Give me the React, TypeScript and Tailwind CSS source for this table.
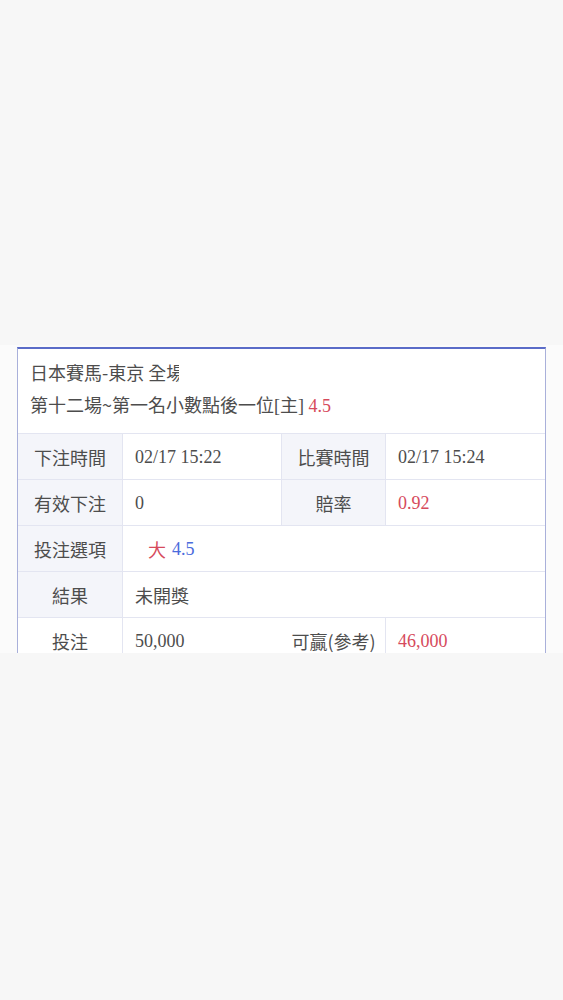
const font = { fontFamily: '"Liberation Serif", "Noto Sans CJK TC", serif' };
const sans = { fontFamily: '"Noto Sans CJK TC", sans-serif' };

function Label({ children, last }: { children: React.ReactNode; last?: boolean }) {
  return (
    <div
      className={`flex items-center justify-center border-r border-b border-[#e3e5f1] text-[18px] leading-none text-[#4d4d4d] ${
        last ? "bg-white" : "bg-[#f4f5fa]"
      }`}
      style={sans}
    >
      {children}
    </div>
  );
}

function Value({ children, className = "" }: { children: React.ReactNode; className?: string }) {
  return (
    <div className={`flex items-center pl-3 border-b border-[#e3e5f1] text-[18px] leading-none text-[#4d4d4d] ${className}`}>
      {children}
    </div>
  );
}

export default function App() {
  return (
    <div className="h-[1000px] bg-[#f7f7f7] flex flex-col" style={font}>
      <div className="h-[345px] shrink-0" />

      <div className="h-[308px] shrink-0 bg-[#fbfbfb] px-[17px] pt-[2px] overflow-hidden">
        <div className="bg-white border-t-2 border-x border-t-[#5b6cc8] border-x-[#a9b0da] h-full">
          {/* header */}
          <div className="pl-3 pt-[7px] pb-[11px] border-b border-[#e3e5f1] text-[18px] text-[#4d4d4d] leading-[32px]">
            <div style={sans}>
              日本賽馬-東京 全<span className="inline-block w-[13px] overflow-hidden align-top whitespace-nowrap">場</span>
            </div>
            <div>
              <span style={sans}>第十二場~第一名小數點後一位</span>
              [主] <span className="text-[#d64a5c]">4.5</span>
            </div>
          </div>

          {/* table */}
          <div className="grid grid-cols-[105px_159px_104px_1fr] auto-rows-[46px]">
            <Label>下注時間</Label>
            <Value className="border-r">02/17 15:22</Value>
            <Label>比賽時間</Label>
            <Value>02/17 15:24</Value>

            <Label>有效下注</Label>
            <Value className="border-r">0</Value>
            <Label>賠率</Label>
            <Value className="text-[#d64a5c]">0.92</Value>

            <Label>投注選項</Label>
            <Value className="col-span-3 pl-[25px]">
              <span className="text-[#d64a5c]" style={sans}>大</span>
              <span className="ml-[6px] text-[#4a6bdc]">4.5</span>
            </Value>

            <Label>結果</Label>
            <Value className="col-span-3">
              <span style={sans}>未開獎</span>
            </Value>

            <Label last>投注</Label>
            <Value>50,000</Value>
            <div
              className="flex items-center justify-center border-r border-[#e3e5f1] text-[18px] leading-none text-[#4d4d4d]"
              style={sans}
            >
              可贏(參考)
            </div>
            <Value className="text-[#d64a5c]">46,000</Value>
          </div>
        </div>
      </div>

      <div className="flex-1" />
    </div>
  );
}
